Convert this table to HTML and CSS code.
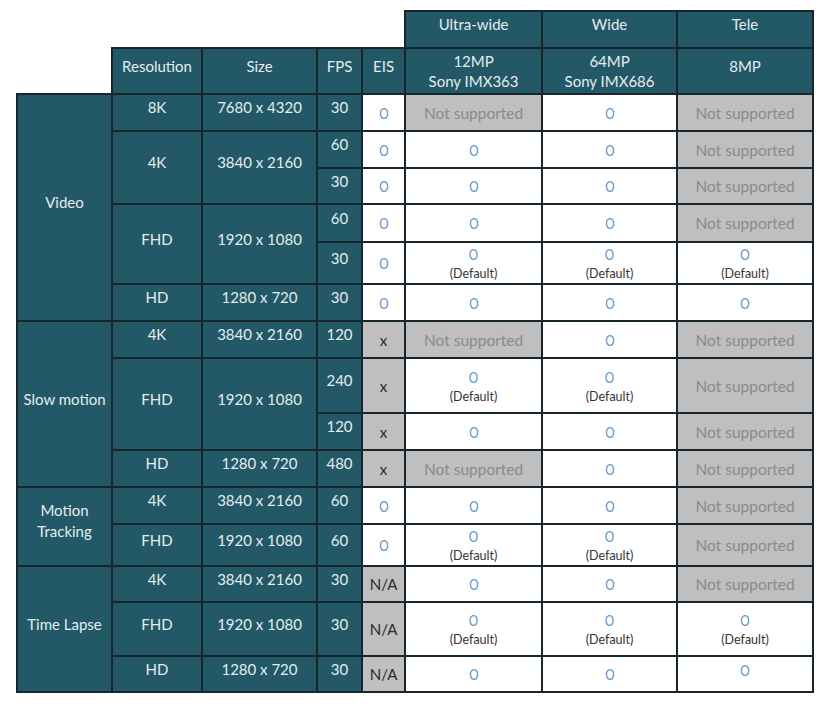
FILE: index.html
```html
<!DOCTYPE html>
<html lang="en">
<head>
<meta charset="utf-8">
<title>Camera modes</title>
<link rel="stylesheet" href="styles.css">
</head>
<body>
<table class="spec">
  <colgroup>
    <col class="c-mode"><col class="c-res"><col class="c-size"><col class="c-fps"><col class="c-eis">
    <col class="c-cam"><col class="c-cam2"><col class="c-cam3">
  </colgroup>
  <thead>
    <tr class="h37">
      <td class="blank" colspan="5"></td>
      <th class="hd">Ultra-wide</th>
      <th class="hd">Wide</th>
      <th class="hd">Tele</th>
    </tr>
    <tr class="h46">
      <td class="blank"></td>
      <th class="hd">Resolution</th>
      <th class="hd">Size</th>
      <th class="hd">FPS</th>
      <th class="hd">EIS</th>
      <th class="hd two">12MP<br>Sony IMX363</th>
      <th class="hd two">64MP<br>Sony IMX686</th>
      <th class="hd">8MP</th>
    </tr>
  </thead>
  <tbody>
    <tr class="h37">
      <td class="lb" rowspan="6">Video</td>
      <td class="lb">8K</td><td class="lb">7680 x 4320</td><td class="lb">30</td>
      <td class="v"><span class="ok">O</span></td>
      <td class="ns">Not supported</td>
      <td class="v"><span class="ok">O</span></td>
      <td class="ns">Not supported</td>
    </tr>
    <tr class="h37">
      <td class="lb" rowspan="2">4K</td><td class="lb" rowspan="2">3840 x 2160</td><td class="lb">60</td>
      <td class="v"><span class="ok">O</span></td>
      <td class="v"><span class="ok">O</span></td>
      <td class="v"><span class="ok">O</span></td>
      <td class="ns">Not supported</td>
    </tr>
    <tr class="h36">
      <td class="lb">30</td>
      <td class="v"><span class="ok">O</span></td>
      <td class="v"><span class="ok">O</span></td>
      <td class="v"><span class="ok">O</span></td>
      <td class="ns">Not supported</td>
    </tr>
    <tr class="h38">
      <td class="lb" rowspan="2">FHD</td><td class="lb" rowspan="2">1920 x 1080</td><td class="lb">60</td>
      <td class="v"><span class="ok">O</span></td>
      <td class="v"><span class="ok">O</span></td>
      <td class="v"><span class="ok">O</span></td>
      <td class="ns">Not supported</td>
    </tr>
    <tr class="h42">
      <td class="lb">30</td>
      <td class="v"><span class="ok">O</span></td>
      <td class="v"><span class="ok line">O</span><span class="def">(Default)</span></td>
      <td class="v"><span class="ok line">O</span><span class="def">(Default)</span></td>
      <td class="v"><span class="ok line">O</span><span class="def">(Default)</span></td>
    </tr>
    <tr class="h37">
      <td class="lb">HD</td><td class="lb">1280 x 720</td><td class="lb">30</td>
      <td class="v"><span class="ok">O</span></td>
      <td class="v"><span class="ok">O</span></td>
      <td class="v"><span class="ok">O</span></td>
      <td class="v"><span class="ok">O</span></td>
    </tr>

    <tr class="h37">
      <td class="lb" rowspan="4">Slow motion</td>
      <td class="lb">4K</td><td class="lb">3840 x 2160</td><td class="lb">120</td>
      <td class="na">x</td>
      <td class="ns">Not supported</td>
      <td class="v"><span class="ok">O</span></td>
      <td class="ns">Not supported</td>
    </tr>
    <tr class="h55">
      <td class="lb" rowspan="2">FHD</td><td class="lb" rowspan="2">1920 x 1080</td><td class="lb">240</td>
      <td class="na">x</td>
      <td class="v"><span class="ok line">O</span><span class="def">(Default)</span></td>
      <td class="v"><span class="ok line">O</span><span class="def">(Default)</span></td>
      <td class="ns">Not supported</td>
    </tr>
    <tr class="h37">
      <td class="lb">120</td>
      <td class="na">x</td>
      <td class="v"><span class="ok">O</span></td>
      <td class="v"><span class="ok">O</span></td>
      <td class="ns">Not supported</td>
    </tr>
    <tr class="h37">
      <td class="lb">HD</td><td class="lb">1280 x 720</td><td class="lb">480</td>
      <td class="na">x</td>
      <td class="ns">Not supported</td>
      <td class="v"><span class="ok">O</span></td>
      <td class="ns">Not supported</td>
    </tr>

    <tr class="h37">
      <td class="lb two-lb" rowspan="2">Motion<br>Tracking</td>
      <td class="lb">4K</td><td class="lb">3840 x 2160</td><td class="lb">60</td>
      <td class="v"><span class="ok">O</span></td>
      <td class="v"><span class="ok">O</span></td>
      <td class="v"><span class="ok">O</span></td>
      <td class="ns">Not supported</td>
    </tr>
    <tr class="h42">
      <td class="lb">FHD</td><td class="lb">1920 x 1080</td><td class="lb">60</td>
      <td class="v"><span class="ok">O</span></td>
      <td class="v"><span class="ok line">O</span><span class="def">(Default)</span></td>
      <td class="v"><span class="ok line">O</span><span class="def">(Default)</span></td>
      <td class="ns">Not supported</td>
    </tr>

    <tr class="h36">
      <td class="lb" rowspan="3">Time Lapse</td>
      <td class="lb">4K</td><td class="lb">3840 x 2160</td><td class="lb">30</td>
      <td class="na">N/A</td>
      <td class="v"><span class="ok">O</span></td>
      <td class="v"><span class="ok">O</span></td>
      <td class="ns">Not supported</td>
    </tr>
    <tr class="h54">
      <td class="lb">FHD</td><td class="lb">1920 x 1080</td><td class="lb">30</td>
      <td class="na">N/A</td>
      <td class="v"><span class="ok line">O</span><span class="def">(Default)</span></td>
      <td class="v"><span class="ok line">O</span><span class="def">(Default)</span></td>
      <td class="v"><span class="ok line">O</span><span class="def">(Default)</span></td>
    </tr>
    <tr class="h36">
      <td class="lb">HD</td><td class="lb">1280 x 720</td><td class="lb">30</td>
      <td class="na">N/A</td>
      <td class="v"><span class="ok">O</span></td>
      <td class="v"><span class="ok">O</span></td>
      <td class="v top"><span class="ok">O</span></td>
    </tr>
  </tbody>
</table>
</body>
</html>
```
FILE: styles.css
```css
html, body {
  margin: 0;
  padding: 0;
  background: #ffffff;
}

body {
  font-family: "Lato", "Open Sans", sans-serif;
  font-size: 15px;
  color: #222;
}

.spec {
  border-collapse: collapse;
  table-layout: fixed;
  width: 796px;
  margin: 10px 0 0 16px;
}

.c-mode { width: 95px; }
.c-res { width: 90px; }
.c-size { width: 115px; }
.c-fps { width: 45px; }
.c-eis { width: 43px; }
.c-cam { width: 137px; }
.c-cam2 { width: 135px; }
.c-cam3 { width: 136px; }

.h36 { height: 36px; }
.h37 { height: 37px; }
.h38 { height: 38px; }
.h42 { height: 42px; }
.h46 { height: 46px; }
.h54 { height: 54px; }
.h55 { height: 55px; }

.spec td, .spec th {
  border: 2px solid #17262c;
  text-align: center;
  vertical-align: middle;
  padding: 0;
  font-weight: 400;
  line-height: 20px;
  white-space: nowrap;
}

.spec td.blank {
  border: none;
  background: transparent;
}

.hd, .lb {
  background: #235866;
  color: #e4edef;
  padding: 0 2px 11px 2px !important;
}

.hd.two {
  padding-bottom: 0 !important;
}

.lb.two-lb {
  line-height: 21px;
}

.v {
  background: #ffffff;
}

.v.top {
  vertical-align: top;
  padding-top: 3px !important;
}

.ns {
  background: #bfbfbf;
  color: #8a8a8a;
  font-size: 15.5px;
}

.na {
  background: #bfbfbf;
  color: #2a2a2a;
}

.ok {
  display: inline-block;
  color: #5a93c6;
  font-size: 15px;
  transform: scaleX(0.78);
}

.ok.line {
  display: block;
  line-height: 22px;
}

.def {
  display: block;
  font-size: 12.5px;
  line-height: 18px;
  color: #333;
}
```
